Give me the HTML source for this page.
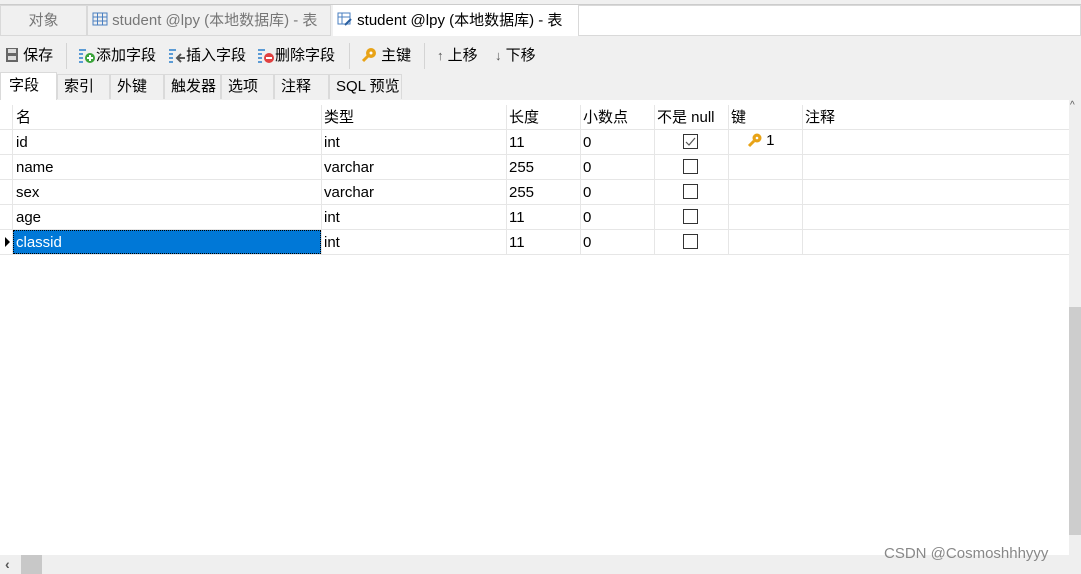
<!DOCTYPE html>
<html><head><meta charset="utf-8"><style>
*{margin:0;padding:0;box-sizing:border-box}
body{width:1081px;height:574px;background:#f0f0f0;font-family:"Liberation Sans","Noto Sans CJK SC",sans-serif;font-size:15px;color:#000;position:relative;overflow:hidden}
.a{position:absolute;white-space:nowrap}
.tab{position:absolute;top:5px;height:31px;border:1px solid #d9d9d9;line-height:29px;font-size:15px;color:#777;white-space:nowrap;overflow:hidden}
.st{position:absolute;top:74px;height:25px;border:1px solid #dadada;border-bottom:none;line-height:24px;font-size:15px;padding-left:6px;background:#f0f0f0;white-space:nowrap}
.grid{position:absolute;left:0;top:100px;width:1069px;height:455px;background:#fff}
.hl{position:absolute;left:0;width:1069px;height:1px;background:#e6e6e6}
.vl{position:absolute;top:5px;width:1px;height:150px;background:#e6e6e6}
.c{position:absolute;font-size:15px;line-height:25px;white-space:nowrap}
.cb{position:absolute;left:683px;width:15px;height:15px;border:1px solid #333;background:#fff}
</style></head><body>
<div class="a" style="left:0;top:4px;width:1081px;height:1px;background:#ccc"></div>
<div class="tab" style="left:0;width:87px;text-align:center;background:#f0f0f0">对象</div>
<div class="tab" style="left:87px;width:244px;background:#f0f0f0;padding-left:4px">
<svg width="16" height="16" style="vertical-align:-2px"><rect x="1" y="2" width="14" height="12" fill="none" stroke="#4a7fc1"/><path d="M1 6H15M1 10H15M5.5 2V14M10.5 2V14" stroke="#4a7fc1"/></svg> student @lpy (本地数据库) - 表</div>
<div class="tab" style="left:333px;width:245px;background:#fff;color:#000;padding-left:3px;border-color:#fff">
<svg width="16" height="16" style="vertical-align:-2px"><rect x="1" y="2" width="12" height="11" fill="none" stroke="#4a7fc1"/><path d="M1 6H13M5 2V13" stroke="#4a7fc1"/><path d="M8 14L14 8" stroke="#2a5fa0" stroke-width="2"/></svg> student @lpy (本地数据库) - 表</div>
<div class="a" style="left:578px;top:5px;width:503px;height:31px;background:#fff;border:1px solid #d9d9d9"></div>
<!-- toolbar -->
<div class="a" style="left:5px;top:47px;line-height:18px">
<svg width="14" height="16" style="vertical-align:-3px"><rect x="1" y="1" width="12" height="14" fill="#666"/><rect x="3" y="2" width="8" height="4" fill="#ddd"/><rect x="3" y="9" width="8" height="4" fill="#ddd"/></svg> 保存</div>
<div class="a" style="left:66px;top:43px;width:1px;height:26px;background:#d4d4d4"></div>
<div class="a" style="left:78px;top:47px;line-height:18px"><svg width="18" height="16" style="vertical-align:-3px"><path d="M1 3H8M1 7H5M1 11H5M1 15H5" stroke="#5b9bd5" stroke-width="2"/><circle cx="12" cy="11" r="5" fill="#3aa33a"/><path d="M9 11H15M12 8V14" stroke="#fff" stroke-width="2"/></svg>添加字段</div>
<div class="a" style="left:168px;top:47px;line-height:18px"><svg width="18" height="16" style="vertical-align:-3px"><path d="M1 3H8M1 7H5M1 11H5M1 15H5" stroke="#5b9bd5" stroke-width="2"/><path d="M17 11H10M13 7L9 11L13 15" stroke="#555" stroke-width="2" fill="none"/></svg>插入字段</div>
<div class="a" style="left:257px;top:47px;line-height:18px"><svg width="18" height="16" style="vertical-align:-3px"><path d="M1 3H8M1 7H5M1 11H5M1 15H5" stroke="#5b9bd5" stroke-width="2"/><circle cx="12" cy="11" r="5" fill="#e04040"/><path d="M9 11H15" stroke="#fff" stroke-width="2"/></svg>删除字段</div>
<div class="a" style="left:349px;top:43px;width:1px;height:26px;background:#d4d4d4"></div>
<div class="a" style="left:361px;top:47px;line-height:18px"><svg width="16" height="16" style="vertical-align:-3px"><circle cx="10" cy="6" r="5" fill="#e8a317"/><circle cx="10" cy="6" r="1.5" fill="#fff"/><path d="M7 9L2 14" stroke="#e8a317" stroke-width="3"/></svg> 主键</div>
<div class="a" style="left:424px;top:43px;width:1px;height:26px;background:#d4d4d4"></div>
<div class="a" style="left:437px;top:47px;line-height:18px"><span style="font-size:13px;color:#555">↑</span> 上移</div>
<div class="a" style="left:495px;top:47px;line-height:18px"><span style="font-size:13px;color:#555">↓</span> 下移</div>
<!-- subtabs -->
<div class="st" style="left:0;width:57px;background:#fff;top:72px;height:28px;line-height:26px;padding-left:8px">字段</div>
<div class="st" style="left:57px;width:53px">索引</div>
<div class="st" style="left:110px;width:54px">外键</div>
<div class="st" style="left:164px;width:57px">触发器</div>
<div class="st" style="left:221px;width:53px">选项</div>
<div class="st" style="left:274px;width:55px">注释</div>
<div class="st" style="left:329px;width:73px">SQL 预览</div>
<!-- grid -->
<div class="grid">
<div class="hl" style="top:29px"></div><div class="hl" style="top:54px"></div><div class="hl" style="top:79px"></div><div class="hl" style="top:104px"></div><div class="hl" style="top:129px"></div><div class="hl" style="top:154px"></div>
<div class="vl" style="left:12px"></div><div class="vl" style="left:321px"></div><div class="vl" style="left:506px"></div><div class="vl" style="left:580px"></div><div class="vl" style="left:654px"></div><div class="vl" style="left:728px"></div><div class="vl" style="left:802px"></div>
<div class="c" style="top:5px;left:16px">名</div><div class="c" style="top:5px;left:324px">类型</div><div class="c" style="top:5px;left:509px">长度</div><div class="c" style="top:5px;left:583px">小数点</div><div class="c" style="top:5px;left:657px">不是 null</div><div class="c" style="top:5px;left:731px">键</div><div class="c" style="top:5px;left:805px">注释</div>
<div class="c" style="top:30px;left:16px">id</div><div class="c" style="top:30px;left:324px">int</div><div class="c" style="top:30px;left:509px">11</div><div class="c" style="top:30px;left:583px">0</div>
<div class="c" style="top:55px;left:16px">name</div><div class="c" style="top:55px;left:324px">varchar</div><div class="c" style="top:55px;left:509px">255</div><div class="c" style="top:55px;left:583px">0</div>
<div class="c" style="top:80px;left:16px">sex</div><div class="c" style="top:80px;left:324px">varchar</div><div class="c" style="top:80px;left:509px">255</div><div class="c" style="top:80px;left:583px">0</div>
<div class="c" style="top:105px;left:16px">age</div><div class="c" style="top:105px;left:324px">int</div><div class="c" style="top:105px;left:509px">11</div><div class="c" style="top:105px;left:583px">0</div>
<div class="a" style="top:130px;left:13px;width:308px;height:24px;background:#0078d7;border:1px dotted #000"></div>
<div class="c" style="top:130px;left:16px;color:#fff">classid</div><div class="c" style="top:130px;left:324px">int</div><div class="c" style="top:130px;left:509px">11</div><div class="c" style="top:130px;left:583px">0</div>
<div class="a" style="left:5px;top:137px;width:0;height:0;border-left:5px solid #000;border-top:5px solid transparent;border-bottom:5px solid transparent"></div>
<div class="cb" style="top:34px"><svg width="13" height="13" style="position:absolute;left:0;top:0"><path d="M2 7L5 10L11 3" stroke="#555" fill="none" stroke-width="1.2"/></svg></div>
<div class="cb" style="top:59px"></div><div class="cb" style="top:84px"></div><div class="cb" style="top:109px"></div><div class="cb" style="top:134px"></div>
<div class="a" style="left:747px;top:33px;line-height:16px;font-size:15px"><svg width="15" height="15" style="vertical-align:-3px"><circle cx="10" cy="5" r="4.5" fill="#e8a317"/><circle cx="10" cy="5" r="1.3" fill="#fff"/><path d="M7 8L2 13" stroke="#e8a317" stroke-width="3"/></svg> 1</div>
</div>
<!-- scrollbars -->
<div class="a" style="left:1069px;top:100px;width:12px;height:455px;background:#efefef"></div>
<div class="a" style="left:1069px;top:307px;width:12px;height:228px;background:#cdcdcd"></div>
<div class="a" style="left:1070px;top:100px;font-size:10px;color:#555">^</div>
<div class="a" style="left:0;top:555px;width:1081px;height:19px;background:#efefef"></div>
<div class="a" style="left:21px;top:555px;width:21px;height:19px;background:#c8c8c8"></div>
<div class="a" style="left:5px;top:556px;font-size:14px;color:#555;font-weight:bold">‹</div>
<div class="a" style="left:884px;top:545px;font-size:15px;color:#888">CSDN @Cosmoshhhyyy</div>
</body></html>
